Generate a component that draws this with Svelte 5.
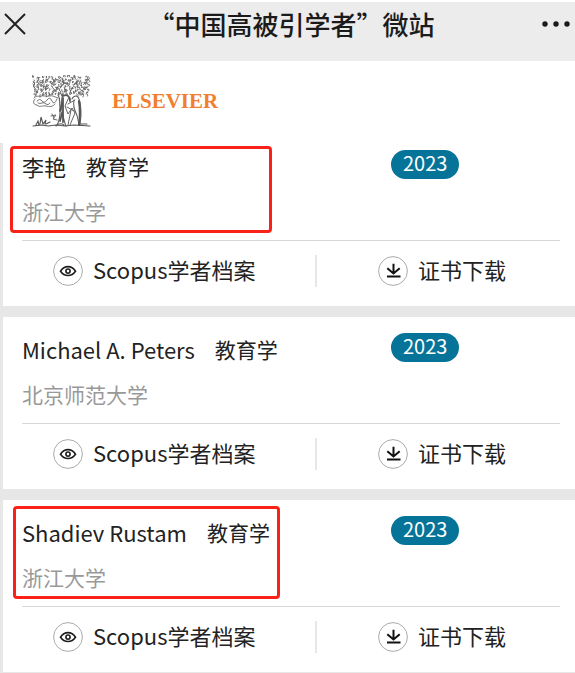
<script lang="ts">
	type Mark = 'short' | 'tall';

	interface Scholar {
		name: string;
		field: string;
		school: string;
		year: number;
		mark?: Mark;
	}

	const scholars: Scholar[] = [
		{ name: '李艳', field: '教育学', school: '浙江大学', year: 2023, mark: 'short' },
		{ name: 'Michael A. Peters', field: '教育学', school: '北京师范大学', year: 2023 },
		{ name: 'Shadiev Rustam', field: '教育学', school: '浙江大学', year: 2023, mark: 'tall' }
	];

	// small curled strokes for the engraved foliage
	function leaves(): string {
		let seed = 11;
		const rand = () => {
			seed = (seed * 16807) % 2147483647;
			return seed / 2147483647;
		};
		let d = '';
		for (let row = 0; row < 8; row++) {
			for (let col = 0; col < 19; col++) {
				const x = 1.5 + col * 2.95 + rand() * 2;
				const y = 1.5 + row * 2.4 + rand() * 1.6;
				const dx = (rand() - 0.5) * 4;
				const dy = (rand() - 0.5) * 4;
				d += `M${x.toFixed(1)} ${y.toFixed(1)}q${dy.toFixed(1)} ${(-dx).toFixed(1)} ${dx.toFixed(1)} ${dy.toFixed(1)}`;
				d += `q1.2 .8 ${(rand() * 2 - 1).toFixed(1)} 1.6`;
			}
		}
		return d;
	}

	const foliage = leaves();
</script>

<div class="page" lang="zh-CN">
	<header class="topbar">
		<button type="button" class="icon-btn close" aria-label="关闭">
			<svg width="22" height="22" viewBox="0 0 22 22" fill="none" stroke="#222" stroke-width="2">
				<path d="M1 1l20 20M21 1L1 21" />
			</svg>
		</button>
		<h1>“中国高被引学者”微站</h1>
		<button type="button" class="icon-btn" aria-label="更多">
			<svg width="30" height="22" viewBox="0 0 30 22" fill="#1b1b1b">
				<circle cx="4" cy="11" r="2.7" />
				<circle cx="15" cy="11" r="2.7" />
				<circle cx="26" cy="11" r="2.7" />
			</svg>
		</button>
	</header>

	<div class="brand">
		<svg width="59" height="53" viewBox="0 0 59 53" fill="none" stroke="#666" stroke-linecap="round">
			<path d={foliage} stroke-width="1" />
			<path
				d="M2 23c2-3 5-1 7-2s5 1 8 0 6 1 9 2M3 24c-3 3-1 6 2 6 3 3 6 0 9 1s7 1 9-2M5 26q3-3 5 0t5-1 5 1 5-2M6 28q2 1 4 0t4 1 4-1"
				stroke-width="0.9"
			/>
			<path d="M26 20c3 4 1 8 2 12 0 6 1 11-3 18M31 19c-2 6-2 11-1 17 1 5 2 10 4 15" stroke-width="1.2" />
			<path d="M31 21c4-2 7 0 7 5M31 23v24M30 28l-2 8M30 38l-2 8" stroke="#555" stroke-width="1.8" />
			<path d="M37 22l-4 9 3 8 4-6 3 5M36 29l7-4M39 35l-3 15M43 38l-5 12M35 32l7 4" stroke-width="1" />
			<path d="M40 24c2-4 6-4 7 0 2 5 2 11 2 16l-1 10M42 25c-1 5 0 9 2 13s2 8 3 12" stroke-width="1.1" />
			<path d="M47 26c1 6 1 17 0 24" stroke="#555" stroke-width="2.2" />
			<path d="M19 41l5-1-3 4 4 1M20 39l2 4" stroke-width="1" />
			<path
				d="M1 51l9-1 6 1 8-1 9 1 9-1 16 1M4 50l2-4 1 4M8 49l1-7 2 7M11 49l3-4-1 4M14 49l4-2M24 51q4-4 8-1M49 49h6"
				stroke="#555"
				stroke-width="1.1"
			/>
		</svg>
		<span class="brand-name">ELSEVIER</span>
	</div>

	<main class="list">
		{#each scholars as scholar}
			<article class="card">
				<div class="summary">
					<div>
						<h2 class="name-row">
							<span>{scholar.name}</span>
							<span class="field">{scholar.field}</span>
						</h2>
						<p class="school">{scholar.school}</p>
					</div>
					<span class="year">{scholar.year}</span>
				</div>
				<div class="actions">
					<a class="action" href="#scopus">
						<svg width="30" height="30" viewBox="0 0 30 30" fill="none" stroke="#1d1d1d">
							<circle cx="15" cy="15" r="14.4" stroke="#aaa" />
							<path d="M7.5 15.2C11.5 9.1 18.5 9.1 22.5 15.2 18.5 20.9 11.5 20.9 7.5 15.2z" stroke-width="1.6" />
							<circle cx="15" cy="15.1" r="2.1" stroke-width="1.6" />
						</svg>
						<span class="label">Scopus学者档案</span>
					</a>
					<a class="action download" href="#certificate">
						<svg width="30" height="30" viewBox="0 0 30 30" fill="none" stroke="#111">
							<circle cx="15" cy="15" r="14.4" stroke="#aaa" />
							<path d="M15.5 7.8v9M9.3 12.2l6.2 5.3 6.2-5.3M9 20.5h13.5" stroke-width="2" />
						</svg>
						<span class="label">证书下载</span>
					</a>
				</div>
				{#if scholar.mark}
					<div class="mark {scholar.mark}"></div>
				{/if}
			</article>
		{/each}
	</main>
</div>

<style>
	:global(body) {
		margin: 0;
		background: #fff;
	}

	.page {
		padding-top: 2px;
		font-family: 'Noto Sans CJK SC', sans-serif;
		color: #222;
	}

	.topbar {
		display: flex;
		justify-content: space-between;
		align-items: flex-start;
		padding: 7px 4px 22px;
		background: #ececec;
	}

	h1 {
		margin: 0;
		font-size: 26px;
		font-weight: 500;
		line-height: 30px;
		color: #1b1b1b;
	}

	.icon-btn {
		display: flex;
		align-items: center;
		height: 30px;
		padding: 0;
		border: none;
		background: transparent;
		cursor: pointer;
	}

	.close {
		width: 38px;
	}

	.brand {
		display: flex;
		align-items: center;
		gap: 21px;
		padding: 14px 32px 15px;
	}

	.brand-name {
		padding-bottom: 2px;
		font-family: 'Liberation Serif', serif;
		font-size: 21px;
		font-weight: 700;
		line-height: 24px;
		color: #f08030;
	}

	.list {
		display: flex;
		flex-direction: column;
		gap: 11px;
		padding: 0 0 11px 3px;
		background: #e7e7e7;
	}

	.card {
		position: relative;
		padding: 0 15px 0 19px;
		background: #fff;
	}

	.summary {
		display: grid;
		grid-template-columns: 369fr 169fr;
		align-items: start;
		padding: 16px 0 12px;
		border-bottom: 1px solid #d8d8d8;
	}

	.card:first-child .summary {
		padding-top: 7px;
	}

	.name-row {
		display: flex;
		align-items: center;
		gap: 20px;
		margin: 0 0 12px;
		font-size: 22px;
		font-weight: 400;
		line-height: 33px;
	}

	.field {
		font-size: 21px;
	}

	.school {
		margin: 0;
		font-size: 21px;
		line-height: 33px;
		color: #999;
	}

	.year {
		justify-self: start;
		padding: 0 12px 3px;
		border-radius: 15px;
		background: #067498;
		color: #fff;
		font-size: 20px;
		line-height: 26px;
	}

	.actions {
		display: grid;
		grid-template-columns: 295fr 243fr;
		padding: 14px 0 19px;
	}

	.action {
		display: flex;
		align-items: center;
		gap: 10px;
		padding-left: 31px;
		color: #222;
		font-size: 22px;
		line-height: 28px;
		text-decoration: none;
	}

	.label {
		padding-bottom: 4px;
	}

	.download {
		padding-left: 61px;
		border-left: 2px solid #e7e7e7;
		margin-left: -2px;
	}

	.mark {
		position: absolute;
		box-sizing: border-box;
		border: 3px solid #fa2118;
		border-radius: 4px;
		pointer-events: none;
	}

	.mark.short {
		top: 3px;
		left: 7px;
		width: 262px;
		height: 87px;
	}

	.mark.tall {
		top: 6px;
		left: 10px;
		width: 267px;
		height: 93px;
	}
</style>
